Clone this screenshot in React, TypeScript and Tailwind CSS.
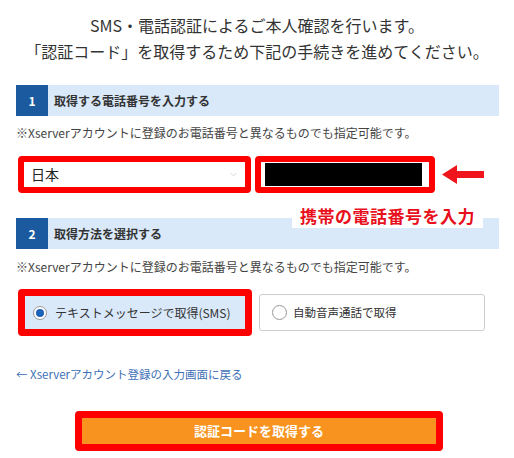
import { ChevronDown } from "lucide-react"

const font = { fontFamily: '"Noto Sans CJK JP", "Noto Sans", sans-serif' }

function StepHeader({ num, title }: { num: string; title: string }) {
  return (
    <div className="flex items-stretch h-[31px] bg-[#d9e9fa]">
      <div className="w-[32px] bg-[#1b5a9e] text-white text-[12px] font-bold flex items-center justify-center">
        {num}
      </div>
      <div className="ml-[6px] flex items-center text-[12px] font-bold text-[#333]">{title}</div>
    </div>
  )
}

function Note() {
  return (
    <p className="text-[12px] leading-[18px] text-[#444] whitespace-nowrap">
      ※Xserverアカウントに登録のお電話番号と異なるものでも指定可能です。
    </p>
  )
}

export default function App() {
  return (
    <div className="w-[514px] h-[458px] bg-white overflow-hidden" style={font}>
      <h1 className="pt-3 text-center text-[16px] leading-[26px] text-[#333] font-normal">
        SMS・電話認証によるご本人確認を行います。
        <br />
        「認証コード」を取得するため下記の手続きを進めてください。
      </h1>

      <div className="pl-4 w-[499px]">
        {/* step 1 */}
        <div className="mt-[21px]">
          <StepHeader num="1" title="取得する電話番号を入力する" />
        </div>
        <div className="mt-2">
          <Note />
        </div>

        <div className="relative mt-[14px] ml-[2px] flex items-center h-[37px]">
          <div className="w-[233px] h-[37px] border-[6px] border-[#ff0000] rounded-[4px] bg-white flex items-center justify-between pl-[7px] pr-[6px]">
            <span className="text-[14px] text-[#222]">日本</span>
            <ChevronDown size={11} strokeWidth={1.2} className="text-[#bbb]" />
          </div>
          <div className="ml-[4px] w-[180px] h-[37px] border-[6px] border-[#ff0000] rounded-[4px] bg-white flex items-stretch pl-[4px] pr-[7px] py-[1px]">
            <div className="flex-1 bg-black" />
          </div>
          <svg width="42" height="19" viewBox="0 0 42 19" className="ml-[7px]">
            <polygon points="0,9.5 15,0 15,6 42,6 42,13 15,13 15,19" fill="#f0141c" />
          </svg>
          <div className="absolute left-[274px] top-[47px] w-[191px] h-[25px] bg-white flex items-center justify-center">
            <span className="text-[17px] font-bold text-[#e8101c] tracking-[0.5px]">携帯の電話番号を入力</span>
          </div>
        </div>

        {/* step 2 */}
        <div className="mt-[25px]">
          <StepHeader num="2" title="取得方法を選択する" />
        </div>
        <div className="mt-[9px]">
          <Note />
        </div>

        <div className="mt-[13px] ml-[2px] flex items-center">
          <div className="w-[234px] h-[47px] border-[7px] border-[#ff0000] rounded-[4px] bg-[#d9e9fa] flex items-center pl-[8px]">
            <span className="w-[14px] h-[14px] shrink-0 rounded-full border border-[#999] bg-white flex items-center justify-center">
              <span className="w-[8px] h-[8px] rounded-full bg-[#1b63b8]" />
            </span>
            <span className="ml-[8px] text-[12px] text-[#333] whitespace-nowrap">テキストメッセージで取得(SMS)</span>
          </div>
          <div className="ml-[7px] w-[226px] h-[37px] border border-[#ccc] rounded-[3px] bg-white flex items-center pl-[12px]">
            <span className="w-[15px] h-[15px] shrink-0 rounded-full border border-[#999] bg-white" />
            <span className="ml-[6px] text-[11.5px] text-[#333] whitespace-nowrap">自動音声通話で取得</span>
          </div>
        </div>

        <div className="mt-[29px] text-[11.5px] leading-[18px] text-[#3d6fb6] whitespace-nowrap">
          ← Xserverアカウント登録の入力画面に戻る
        </div>

        <div className="mt-[28px] ml-[59px] w-[368px] h-[40px] border-[7px] border-[#ff0000] rounded-[4px] bg-[#f7931e] flex items-center justify-center">
          <span className="text-[13px] font-bold text-white">認証コードを取得する</span>
        </div>
      </div>
    </div>
  )
}
